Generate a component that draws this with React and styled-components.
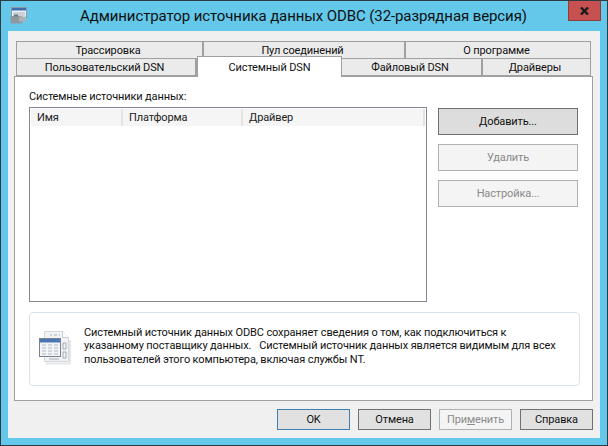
import React from "react";
import styled, { createGlobalStyle } from "styled-components";

const Global = createGlobalStyle`
  html, body { margin: 0; padding: 0; background: #63c8ea; }
  * { box-sizing: border-box; }
`;

const Frame = styled.div`
  width: 608px;
  height: 446px;
  display: flex;
  flex-direction: column;
  background: #63c8ea;
  border: 1px solid #2f3b42;
  font-family: Roboto, "Liberation Sans", sans-serif;
  font-size: 11px;
  letter-spacing: -0.13px;
  color: #111;
`;

const TitleBar = styled.div`
  height: 30px;
  flex: none;
  display: grid;
  grid-template-columns: 1fr auto 1fr;
`;

const AppIcon = styled.svg`
  width: 18px;
  height: 18px;
  margin: 6px 0 0 9px;
`;

const Title = styled.div`
  font-size: 15px;
  letter-spacing: -0.1px;
  line-height: 31px;
  color: #111;
  margin-left: -1px;
`;

const CloseCell = styled.div`
  display: flex;
  justify-content: flex-end;
  padding-right: 6px;
`;

const Close = styled.div`
  width: 33px;
  height: 20px;
  background: #c75050;
  border: 1px solid #8f3f3a;
  border-top: none;
  display: flex;
  align-items: center;
  justify-content: center;
`;

const Client = styled.div`
  width: 592px;
  height: 407px;
  margin-left: 7px;
  background: #f0f0f0;
  padding: 10px 7px 0 6px;
  display: flex;
  flex-direction: column;
`;

const TabRow = styled.div`
  display: flex;
  height: ${(p) => p.$h}px;
  padding: 0 2px;
`;

const Tab = styled.div`
  width: ${(p) => p.$w}px;
  flex: none;
  background: ${(p) => (p.$active ? "#fff" : "#ebebeb")};
  border-top: 1px solid #a0a0a0;
  border-bottom: ${(p) => (p.$active ? "none" : "1px solid #a0a0a0")};
  border-left: ${(p) => (p.$first || p.$active ? "1px solid #a0a0a0" : "none")};
  border-right: ${(p) => (p.$active || p.$last ? 1 : 2)}px solid #a0a0a0;
  padding-right: ${(p) => (p.$active ? 0 : 3)}px;
  display: flex;
  align-items: center;
  justify-content: center;
  position: relative;
  z-index: ${(p) => (p.$active ? 2 : 0)};
  height: ${(p) => (p.$active ? 21 : 18)}px;
  margin-top: ${(p) => (p.$active ? -2 : 0)}px;
`;

const Panel = styled.div`
  width: 579px;
  height: 325px;
  background: #fff;
  border: 1px solid #a0a0a0;
  padding: 12px 14px 0;
  display: flex;
  flex-direction: column;
`;

const PanelLabel = styled.div`
  height: 18px;
  line-height: 16px;
`;

const Columns = styled.div`
  display: flex;
  gap: 11px;
`;

const List = styled.div`
  width: 398px;
  height: 195px;
  border: 1px solid #828790;
  padding: 1px;
  flex: none;
`;

const ListHead = styled.div`
  display: flex;
  height: 17px;
  background: #f5f5f5;
`;

const HeadCell = styled.div`
  width: ${(p) => p.$w}px;
  flex: ${(p) => (p.$grow ? 1 : "none")};
  border-right: 2px solid #e3e3e3;
  padding-left: 6px;
  line-height: 17px;
  color: #222;
`;

const Side = styled.div`
  width: 141px;
  margin-top: 1px;
  display: flex;
  flex-direction: column;
  gap: 9px;
`;

const SideButton = styled.div`
  height: 27px;
  display: flex;
  align-items: center;
  justify-content: center;
  background: ${(p) => (p.$off ? "#f4f4f4" : "#dddddd")};
  border: 1px solid ${(p) => (p.$off ? "#adb2b5" : "#707070")};
  color: ${(p) => (p.$off ? "#8a8a8a" : "#111")};
`;

const Info = styled.div`
  width: 551px;
  height: 74px;
  margin-top: 10px;
  border: 1px solid #d9e3ec;
  border-radius: 4px;
  display: flex;
  padding: 13px 0 0 8px;
`;

const InfoIcon = styled.svg`
  width: 34px;
  height: 34px;
  flex: none;
  margin-top: 5px;
`;

const InfoText = styled.div`
  margin-left: 12px;
  width: 475px;
  line-height: 13.3px;
`;

const Footer = styled.div`
  display: flex;
  justify-content: flex-end;
  gap: 8px;
  padding-top: 8px;
`;

const FootButton = styled.div`
  width: 73px;
  height: 21px;
  display: flex;
  align-items: center;
  justify-content: center;
  background: ${(p) => (p.$off ? "#f4f4f4" : "#e1e1e1")};
  border: 1px solid ${(p) => (p.$main ? "#3c7fb1" : p.$off ? "#adb2b5" : "#707070")};
  color: ${(p) => (p.$off ? "#8a8a8a" : "#111")};
`;

const Hot = styled.span`
  text-decoration: underline;
`;

export default function App() {
  return (
    <Frame>
      <Global />
      <TitleBar>
        <AppIcon viewBox="0 0 18 18">
          <rect x="1.5" y="0.5" width="15" height="10" fill="#eef2f6" stroke="#8b98a8" />
          <rect x="2" y="1" width="14" height="2.5" fill="#3f6fb0" />
          <path d="M3 6h12M3 8h12" stroke="#a8b0ba" />
          <rect x="0.5" y="9" width="12" height="7.5" rx="1" fill="#8d999f" />
          <rect x="9" y="9.5" width="7" height="5" rx="1" fill="#a9b4b8" />
          <rect x="4" y="7.5" width="4" height="2" fill="#6c787e" />
        </AppIcon>
        <Title>Администратор источника данных ODBC (32-разрядная версия)</Title>
        <CloseCell>
          <Close>
            <svg width="9" height="8" viewBox="0 0 9 8">
              <path d="M1 0.5l7 7M8 0.5l-7 7" stroke="#1a1a1a" strokeWidth="2.4" />
            </svg>
          </Close>
        </CloseCell>
      </TitleBar>
      <Client>
        <TabRow $h={17}>
          <Tab $first $w={188}>Трассировка</Tab>
          <Tab $w={202}>Пул соединений</Tab>
          <Tab $last $w={185}>О программе</Tab>
        </TabRow>
        <TabRow $h={18}>
          <Tab $first $w={181}>Пользовательский DSN</Tab>
          <Tab $active $w={145}>Системный DSN</Tab>
          <Tab $w={141}>Файловый DSN</Tab>
          <Tab $last $w={108}>Драйверы</Tab>
        </TabRow>
        <Panel>
          <PanelLabel>Системные источники данных:</PanelLabel>
          <Columns>
            <List>
              <ListHead>
                <HeadCell $w={92}>Имя</HeadCell>
                <HeadCell $w={120}>Платформа</HeadCell>
                <HeadCell $grow>Драйвер</HeadCell>
              </ListHead>
            </List>
            <Side>
              <SideButton>Добавить...</SideButton>
              <SideButton $off>Удалить</SideButton>
              <SideButton $off>Настройка...</SideButton>
            </Side>
          </Columns>
          <Info>
            <InfoIcon viewBox="0 0 34 34">
              <path d="M8 3.5h3M8 32.5h24V9" fill="none" stroke="#e6e7e9" strokeWidth="2" />
              <path d="M6.5 0.5h18l6 6v24h-24z" fill="#f1f2f4" stroke="#d4d6da" />
              <path d="M24.5 0.5v6h6" fill="#fff" stroke="#c8cacd" />
              <path d="M25 12h3v6h-3zM25 21h3v6h-3zM12 4h2M16 4h3M21 4h1M11 28h10" fill="none" stroke="#a6adb8" />
              <rect x="1.5" y="7.5" width="21" height="18" fill="#f3f4f6" stroke="#7a8292" />
              <rect x="2" y="8" width="20" height="3.5" fill="#4a77b4" />
              <path d="M4 14h4M10 14h4M16 14h4M4 17h4M10 17h4M16 17h4M4 20h4M10 20h4M16 20h4M4 23h4M10 23h4M16 23h4" stroke="#b3b8c2" />
            </InfoIcon>
            <InfoText>
              Системный источник данных ODBC сохраняет сведения о том, как подключиться к указанному поставщику данных.&nbsp;&nbsp; Системный источник данных является видимым для всех пользователей этого компьютера, включая службы NT.
            </InfoText>
          </Info>
        </Panel>
        <Footer>
          <FootButton $main>OK</FootButton>
          <FootButton>Отмена</FootButton>
          <FootButton $off>При<Hot>м</Hot>енить</FootButton>
          <FootButton>Справка</FootButton>
        </Footer>
      </Client>
    </Frame>
  );
}
